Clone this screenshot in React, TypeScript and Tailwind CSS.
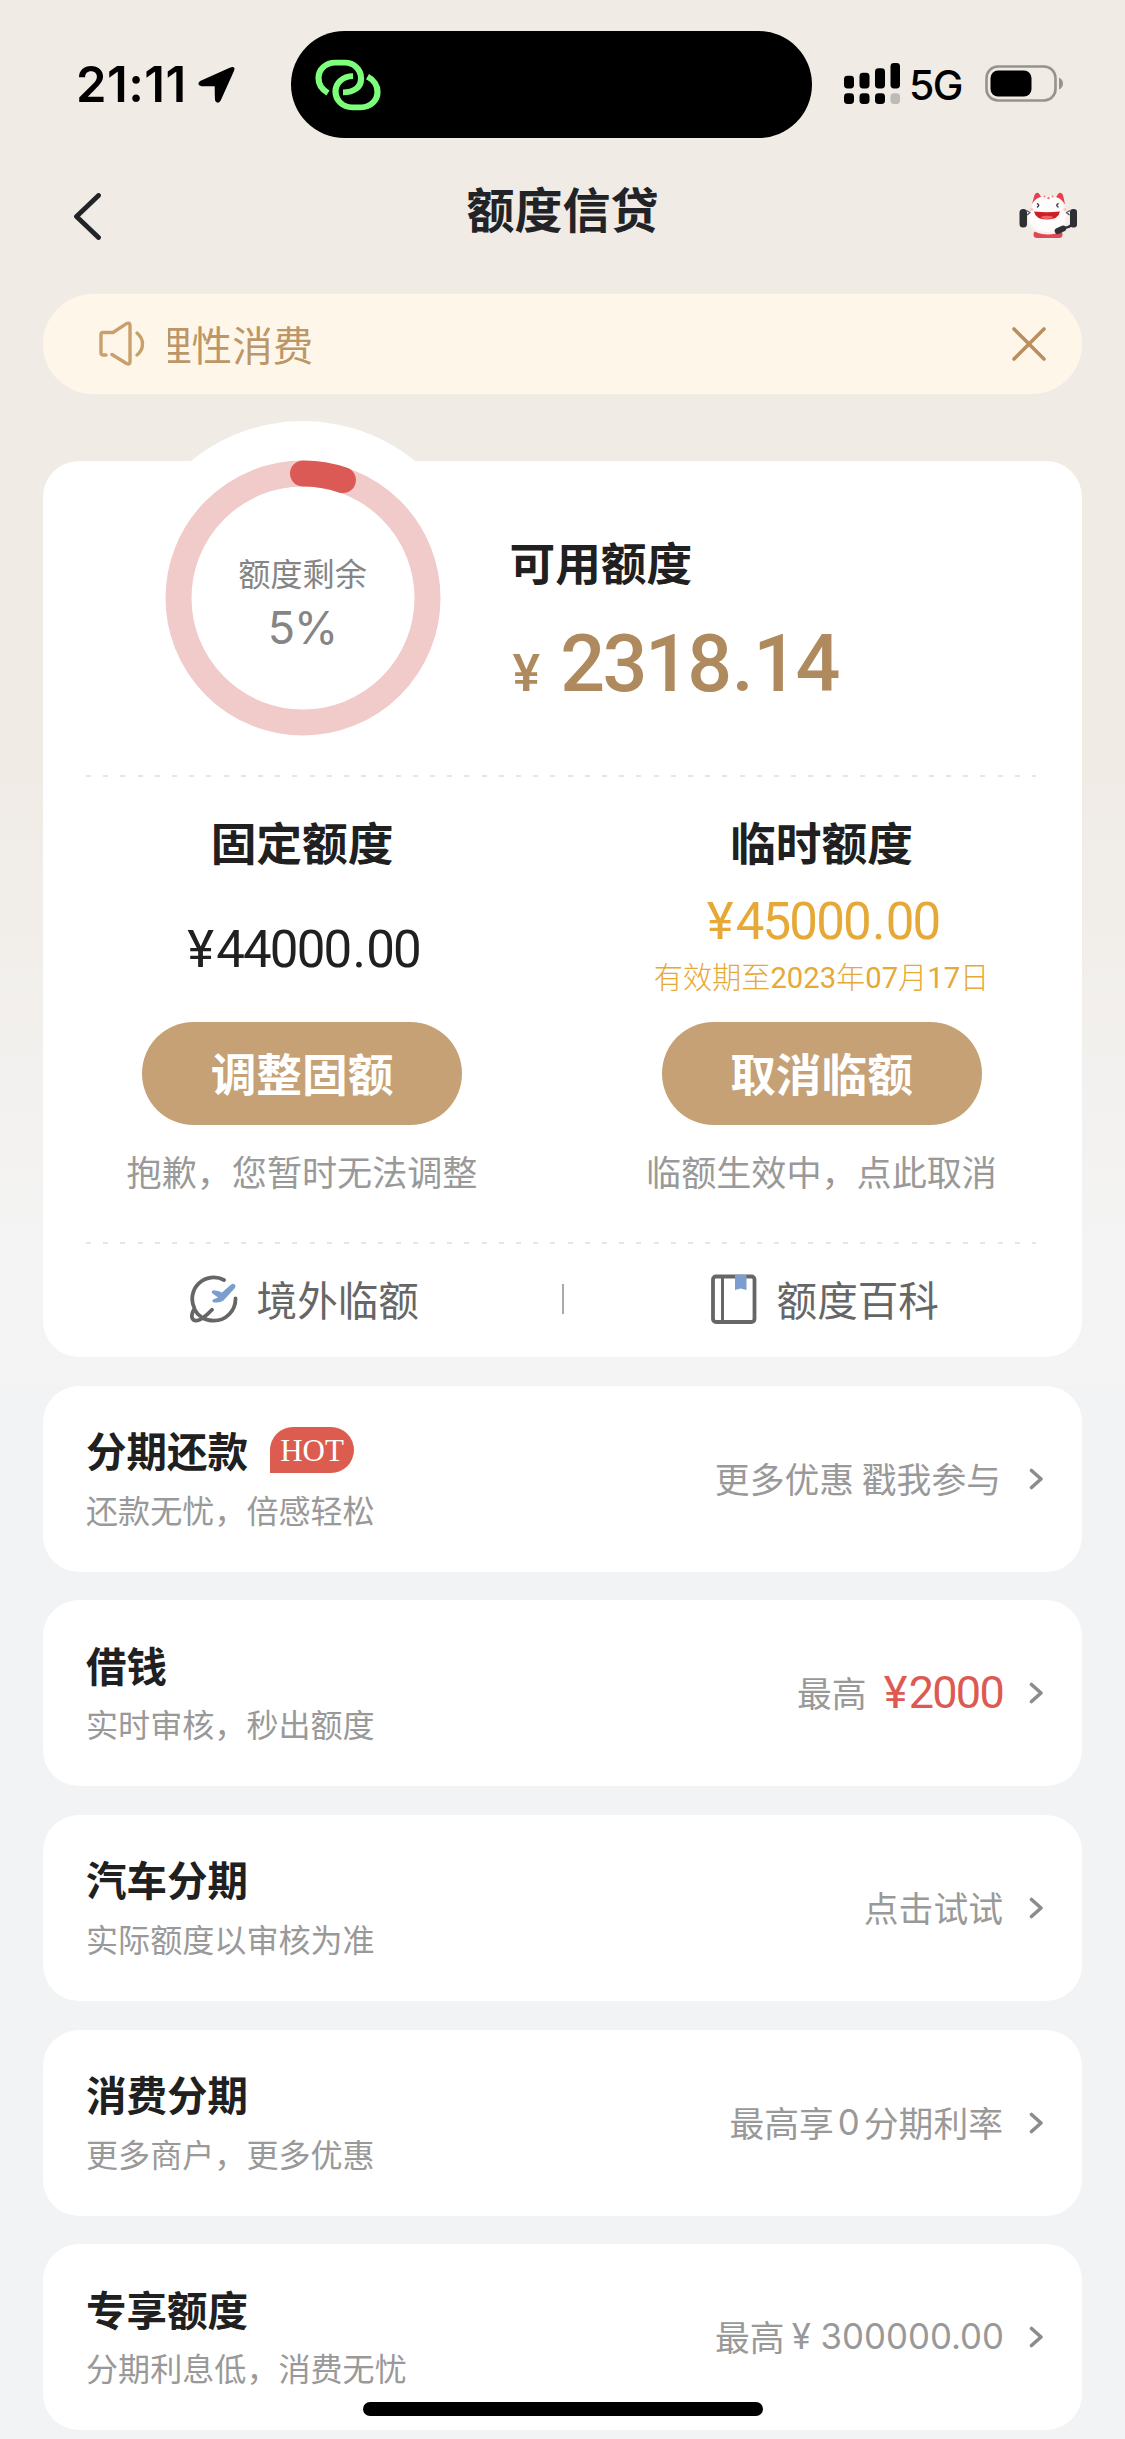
import type { ReactNode } from 'react';

const CJK = "font-['Noto_Sans_CJK_SC',sans-serif]";

function LocationArrow() {
  return (
    <svg className="ml-[11px] h-[38px] w-[38px]" viewBox="0 0 39 40" preserveAspectRatio="none">
      <path d="M2.5 16.5 33.5 2.2Q38 .6 36.2 5L22.6 36Q20.6 39.6 18.4 36.5Q17.9 35 17.9 20.6L4 20.6Q-.8 19.6 2.5 16.5Z" fill="#000" stroke="#000" strokeWidth="1.5" strokeLinejoin="round" />
    </svg>
  );
}

function LinkIcon() {
  return (
    <svg className="h-[52px] w-[66px]" viewBox="0 0 66 56" preserveAspectRatio="none" fill="none" stroke="#7dff7b" strokeWidth="6.200">
      <path d="M13 36.5C7 33 3.500 27 3.500 20.500C3.500 11 11 4 20 4H30C39 4 46 11.500 46 20.500V21.500C46 30.500 39 36 28 36" />
      <path d="M38 18.500C28 18.500 20.500 25.500 20.500 35C20.500 44.500 28 52 37 52H46C55.500 52 62.500 44.500 62.500 35.500C62.500 29 59 22.500 52.500 19" />
    </svg>
  );
}

function Signal() {
  return (
    <svg className="h-[41px] w-[57px]" viewBox="0 0 57 42" preserveAspectRatio="none">
      <rect x="0" y="13" width="10" height="13" rx="3.500" />
      <rect x="15.500" y="10" width="10" height="16" rx="3.500" />
      <rect x="31" y="5.500" width="10" height="20.500" rx="3.500" />
      <rect x="46.500" y="0" width="9.500" height="26" rx="3.500" />
      <rect x="0" y="31" width="10" height="11" rx="3.500" />
      <rect x="15.500" y="31" width="10" height="11" rx="3.500" />
      <rect x="31" y="31" width="10" height="11" rx="3.500" />
      <rect x="46.500" y="31" width="9.500" height="11" rx="3.500" fill="#bebab6" />
    </svg>
  );
}

function Battery() {
  return (
    <svg className="h-[37px] w-[79px]" viewBox="0 0 79 37">
      <rect x="1.500" y="1.500" width="69" height="34" rx="11.500" fill="none" stroke="#96928d" strokeWidth="2.600" />
      <rect x="5.500" y="5.500" width="41" height="26" rx="7.500" />
      <path d="M74 12.500Q78 14.500 78 18.500Q78 22.500 74 24.500Z" fill="#96928d" />
    </svg>
  );
}

function Mascot() {
  return (
    <svg className="h-[46px] w-[60px]" viewBox="0 0 60 46">
      <path d="M14 12 16.500 3Q18.500 -.5 21 1.500L25 8ZM47 12 45 3Q43 -.5 40.500 1.500L36 8Z" fill="#e5404f" />
      <rect x="15.500" y="39" width="29" height="7" rx="3.500" fill="#e04854" />
      <path d="M30.500 4C42 4 46 9 47.500 15C51.500 20 52.500 26 50 32C47 38.500 40 42.500 30 42.500C20 42.500 13 38.500 10.500 32C8 26 9 20 13 15C14.500 9 19 4 30.500 4Z" fill="#f9efee" />
      <path d="M30 4C41 4 44.500 9 45.500 15C49 20 49.500 26 46.500 31C43.500 36.500 38 40 29.500 40C20 40 14 36 12 30.500C10 25 10.500 20 14 15C15.500 9 19 4 30 4Z" fill="#fffcfc" />
      <rect x="1.500" y="17" width="7.500" height="18.500" rx="3.500" fill="#2f3034" />
      <rect x="52" y="17" width="7" height="18.500" rx="3" fill="#2f3034" />
      <path d="M8.500 18.500 12 20.500 9 23M52 18.500 48.500 20.500 51.500 23" fill="none" stroke="#555" strokeWidth="1.200" />
      <path d="M54.500 32.500Q51 35.500 46 36" fill="none" stroke="#2f3034" strokeWidth="2.500" />
      <rect x="36.500" y="35" width="12" height="6" rx="3" fill="#2f3034" transform="rotate(-24 42 38)" />
      <path d="M19 11.500q3.500 1.700 0 3.800M40.500 11.500q-3.500 1.700 0 3.800" fill="none" stroke="#3a3a3c" strokeWidth="1.400" />
      <path d="M16 19.500Q29 21 42 19.500Q40.500 27.500 29 27.500Q17.500 27.500 16 19.500Z" fill="#cf1f24" />
      <ellipse cx="29" cy="25.300" rx="6" ry="1.600" fill="#e8686c" />
      <circle cx="26.500" cy="4.500" r="1" fill="#f07a80" />
      <circle cx="30.500" cy="6" r="1.300" fill="#f07a80" />
      <circle cx="34.500" cy="4.500" r="1" fill="#f07a80" />
      <circle cx="13.500" cy="17.500" r="1.800" fill="#f9c9cb" />
      <circle cx="47" cy="17.500" r="1.800" fill="#f9c9cb" />
    </svg>
  );
}

function Speaker() {
  return (
    <svg className="h-[46px] w-[46px]" viewBox="0 0 46 46" fill="none" stroke="#c9a06c" strokeWidth="3.400" strokeLinecap="round" strokeLinejoin="round">
      <path d="M7 34H4Q2 34 2 32V13.500Q2 11.500 4 11.500H14L27.500 2.600Q31 1 31 4.500V40.500Q31 44 27.500 42.500L13 33.500" />
      <path d="M38 12Q43.500 16.500 43.500 23Q43.500 29.500 38 34" />
    </svg>
  );
}

function PlaneIcon() {
  return (
    <svg className="h-[50px] w-[48px]" viewBox="0 0 48 50" fill="none" strokeLinecap="round" strokeLinejoin="round">
      <path d="M34 6A21.500 21.500 0 0 0 4.500 34.500C2 38.500 1.300 42 2.300 44.300C4 48 8.500 46.800 12 44.500C16 42 19 39 22 35.800M4.500 35.500C8 42 15 46.700 23.500 46.700A21.700 21.700 0 0 0 45.500 24.500" stroke="#666" strokeWidth="3.800" />
      <path d="M44.500 10.300Q46.500 12.300 44.500 14.500L33.500 26.500Q29.500 29.500 23 28.200Q21.500 26.800 23 25.600L28 23.500L22 19Q21 17 23.500 16.300Q28.500 16.500 32 18.500L40.500 11Q43 9 44.500 10.300Z" fill="#7b9ecf" />
    </svg>
  );
}

function BookIcon() {
  return (
    <svg className="h-[50px] w-[46px]" viewBox="0 0 46 50" fill="none">
      <rect x="2" y="2.500" width="41.500" height="45.500" rx="3" stroke="#666" strokeWidth="3.800" />
      <path d="M11.500 2.500V48" stroke="#666" strokeWidth="3" />
      <path d="M24 0.800H35.500V16L29.700 14.500L24 16Z" fill="#7b9ecf" />
    </svg>
  );
}

function Chevron() {
  return (
    <svg className="h-[22px] w-[15px]" viewBox="0 0 15 22" fill="none" stroke="#8c8c8c" strokeWidth="3.600" strokeLinecap="round" strokeLinejoin="round">
      <path d="M2.500 2.500 12 11 2.500 19.500" />
    </svg>
  );
}

function DashedLine() {
  return <div className="mr-[46px] ml-[43px] h-[2px] bg-[repeating-linear-gradient(90deg,#e6e6e6_0px,#e6e6e6_5px,transparent_5px,transparent_17.200px)]" />;
}

function Amount({ whole, cents }: { whole: string; cents: string }) {
  return (
    <>
      <span className="mr-[4px]">¥</span>
      {whole}
      <span className="mx-[2px]">.</span>
      {cents}
    </>
  );
}

function ProductRow({ title, subtitle, hot, children }: { title: string; subtitle: string; hot?: boolean; children: ReactNode }) {
  return (
    <section className="flex h-[186px] items-center justify-between rounded-[36px] bg-white pr-[38px] pl-[43px]">
      <div>
        <div className="flex h-[60px] items-center pt-[3px]">
          <h2 className="text-[40.500px] leading-[60px] font-bold text-[#202020]">{title}</h2>
          {hot && (
            <span className="ml-[22px] flex h-[46px] w-[84px] items-center justify-center rounded-[23px] rounded-bl-none bg-[#dd5c50] font-['Liberation_Serif',serif] text-[31px] leading-none text-white">
              HOT
            </span>
          )}
        </div>
        <p className="h-[60px] text-[32.100px] leading-[60px] font-normal text-[#999]">{subtitle}</p>
      </div>
      <div className="flex items-center">
        <div className="flex items-center pb-[2px] text-[34.800px] leading-[50px] font-normal whitespace-pre text-[#999]">{children}</div>
        <span className="ml-[26px]">
          <Chevron />
        </span>
      </div>
    </section>
  );
}

export default function App() {
  return (
    <div className={`relative h-[2439px] w-[1125px] overflow-hidden bg-[#f2f3f5] ${CJK}`}>
      <div className="h-[1385.500px] bg-[linear-gradient(180deg,#f0ebe5_0px,#f0ebe5_760px,#f4f4f4_1250px)]">
        <header className="flex h-[182px] items-start pt-[31px]">
          <div className="flex h-[107px] w-[291px] items-center pl-[76px]">
            <span className="w-[111px] font-['Inter',sans-serif] text-[49px] leading-none font-semibold tracking-[0.500px] whitespace-nowrap">21:11</span>
            <LocationArrow />
          </div>
          <div className="flex h-[107px] w-[521px] items-center rounded-full bg-black pl-[24px]">
            <LinkIcon />
          </div>
          <div className="flex h-[107px] items-center pb-[2px] pl-[32px]">
            <Signal />
            <span className="ml-[8px] w-[55px] pt-[3px] font-['Inter',sans-serif] text-[41px] leading-none font-medium tracking-[-1.500px]">5G</span>
            <span className="ml-[21px]">
              <Battery />
            </span>
          </div>
        </header>

        <nav className="flex h-[112px] items-start justify-between pr-[47px] pl-[72px]">
          <svg className="mt-[11px] h-[47px] w-[60px]" viewBox="0 0 60 47" fill="none" stroke="#222326" strokeWidth="4.800" strokeLinecap="round" strokeLinejoin="round">
            <path d="M26.500 2.500 4.500 23.500 26.500 44.500" />
          </svg>
          <h1 className="-mt-[11px] -ml-[25px] text-[48px] leading-[72px] font-bold text-[#222326]">额度信贷</h1>
          <span className="mt-[10px]">
            <Mascot />
          </span>
        </nav>

        <div className="mx-[43px] flex h-[100px] items-center rounded-full bg-[#fef7e9] pl-[56px]">
          <Speaker />
          <div className="ml-[23px] flex-1 overflow-hidden">
            <p className="-ml-[17px] text-[40.600px] leading-[60px] font-normal text-[#bd9668]">理性消费</p>
          </div>
          <svg className="mr-[35px] h-[36px] w-[36px]" viewBox="0 0 36 36" stroke="#b98f60" strokeWidth="3.600" strokeLinecap="round">
            <path d="M3 3 33 33M33 3 3 33" />
          </svg>
        </div>

        <section className="mx-[43px] mt-[67px] h-[896px] rounded-[36px] bg-white">
          <div className="flex h-[314px]">
            <div className="relative -mt-[40px] ml-[82.500px] grid h-[354px] w-[354px] place-items-center rounded-full bg-white">
              <svg className="absolute inset-0 h-[354px] w-[354px]" viewBox="0 0 354 354" fill="none">
                <circle cx="177" cy="177" r="124.500" stroke="#f1caca" strokeWidth="26" />
                <circle cx="177" cy="177" r="124.500" stroke="#db5a55" strokeWidth="26" strokeLinecap="round" pathLength="100" strokeDasharray="5.200 94.800" transform="rotate(-90 177 177)" />
              </svg>
              <div className="relative flex flex-col items-center pt-[8px] text-[#858585]">
                <span className="text-[32.200px] leading-[48px] font-normal">额度剩余</span>
                <span className="mt-[4px] font-['Inter',sans-serif] text-[45px] leading-[56px] font-normal tracking-[-1px]">5%</span>
              </div>
            </div>
            <div className="ml-[30px] pt-[66px]">
              <h2 className="text-[45.700px] leading-[68px] font-bold text-[#202020]">可用额度</h2>
              <p className="mt-[19px] flex items-baseline font-['Roboto',sans-serif] leading-[100px] font-medium text-[#af8a5f]">
                <span className="ml-[3px] text-[52px]">¥</span>
                <span className="ml-[20px] text-[79px] tracking-[-2.500px]">
                  2318<span className="mx-[2px]">.</span>14
                </span>
              </p>
            </div>
          </div>
          <DashedLine />

          <div className="grid h-[465px] grid-cols-2 text-center">
            <div className="flex flex-col items-center pt-[30px] pr-[1.500px]">
              <h3 className="text-[45.700px] leading-[68px] font-bold text-[#202020]">固定额度</h3>
              <p className="mt-[31px] h-[88px] pl-[3px] font-['Roboto',sans-serif] text-[51px] leading-[88px] font-normal tracking-[-1.800px] text-[#202020]">
                <Amount whole="44000" cents="00" />
              </p>
              <button className="mt-[28px] h-[103px] w-[320px] rounded-full bg-[#c5a175] pb-[2px] text-[45.700px] leading-[101px] font-bold text-white">调整固额</button>
              <p className="mt-[20px] text-[35.100px] leading-[52px] font-normal text-[#999]">抱歉，您暂时无法调整</p>
            </div>
            <div className="flex flex-col items-center pt-[30px] pr-[1.500px]">
              <h3 className="text-[45.700px] leading-[68px] font-bold text-[#202020]">临时额度</h3>
              <p className="mt-[3px] h-[88px] pl-[3px] font-['Roboto',sans-serif] text-[51px] leading-[88px] font-normal tracking-[-1.800px] text-[#e6a937]">
                <Amount whole="45000" cents="00" />
              </p>
              <p className="-mt-[2px] h-[58px] font-['Roboto','Noto_Sans_CJK_SC',sans-serif] text-[29.200px] leading-[28px] font-light text-[#e6a937]">
                有效期至<span className="font-normal">2023</span>年<span className="font-normal">07</span>月<span className="font-normal">17</span>日
              </p>
              <button className="h-[103px] w-[320px] rounded-full bg-[#c5a175] pb-[2px] text-[45.700px] leading-[101px] font-bold text-white">取消临额</button>
              <p className="mt-[20px] text-[35.100px] leading-[52px] font-normal text-[#999]">临额生效中，点此取消</p>
            </div>
          </div>
          <DashedLine />

          <div className="flex h-[110px] items-center text-[40.600px] leading-[60px] text-[#666]">
            <div className="flex flex-1 items-center justify-center pl-[4px] font-normal">
              <PlaneIcon />
              <span className="ml-[19px]">境外临额</span>
            </div>
            <span className="h-[30px] w-[2px] bg-[#aaa]" />
            <div className="flex flex-1 items-center justify-center pl-[4px] font-normal">
              <BookIcon />
              <span className="ml-[20px]">额度百科</span>
            </div>
          </div>
        </section>
      </div>

      <main className="mx-[43px] flex flex-col gap-[28.700px]">
        <ProductRow title="分期还款" subtitle="还款无忧，倍感轻松" hot>
          <span className="mr-[2px]">更多优惠 戳我参与</span>
        </ProductRow>
        <ProductRow title="借钱" subtitle="实时审核，秒出额度">
          最高
          <span className="ml-[17px] pt-[2px] font-['Roboto',sans-serif] text-[45px] leading-[50px] font-normal tracking-[-1.700px] text-[#dd5a52]">
            <span className="mr-[3px]">¥</span>2000
          </span>
        </ProductRow>
        <ProductRow title="汽车分期" subtitle="实际额度以审核为准">
          点击试试
        </ProductRow>
        <ProductRow title="消费分期" subtitle="更多商户，更多优惠">
          最高享<span className="mx-[4px] font-['Inter',sans-serif]">0</span>分期利率
        </ProductRow>
        <ProductRow title="专享额度" subtitle="分期利息低，消费无忧">
          最高<span className="-mr-[1px] ml-[7px] font-['Inter',sans-serif]">¥ 300000.00</span>
        </ProductRow>
      </main>

      <div className="absolute bottom-[23px] left-[363px] h-[14px] w-[400px] rounded-full bg-black" />
    </div>
  );
}
